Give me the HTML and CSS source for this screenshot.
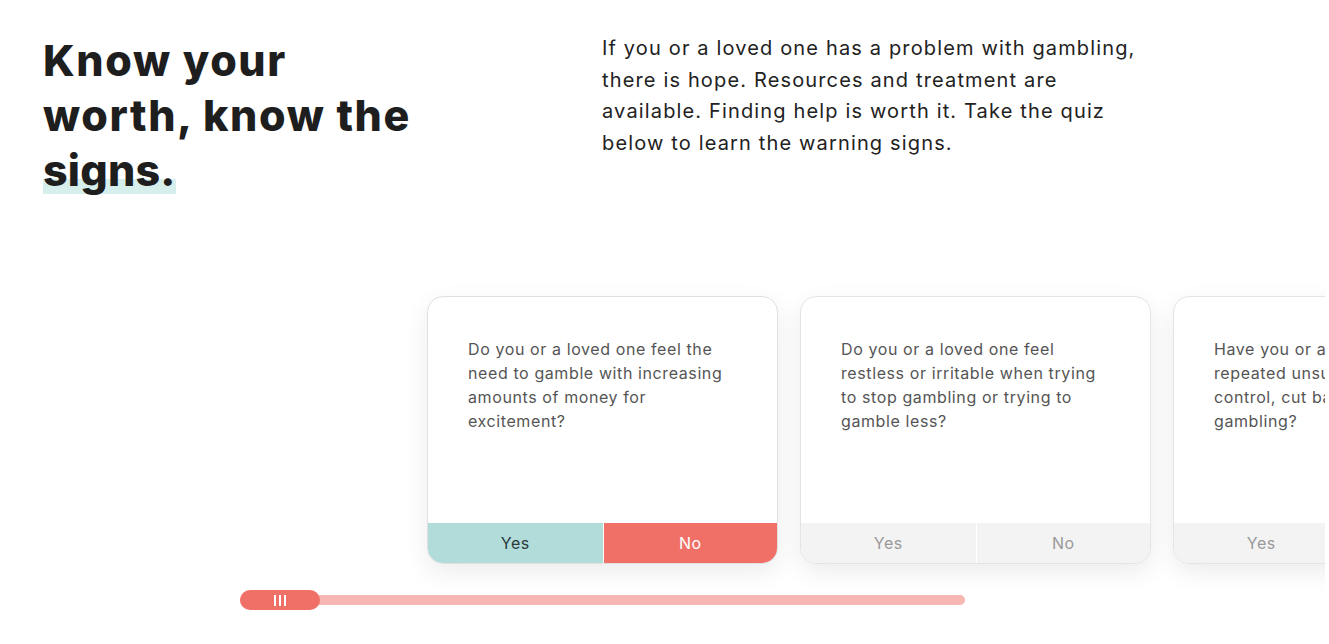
FILE: index.html
```html
<!DOCTYPE html>
<html lang="en">
<head>
<meta charset="utf-8">
<title>Know your worth</title>
<link rel="stylesheet" href="styles.css">
</head>
<body>
<main class="page">
  <section class="intro">
    <h1 class="title">Know your<br>worth, know the<br><span class="mark">signs.</span></h1>
    <p class="lead">If you or a loved one has a problem with gambling, there is hope. Resources and treatment are available. Finding help is worth it. Take the quiz below to learn the warning signs.</p>
  </section>
  <section class="quiz">
    <div class="cards">
      <div class="card active">
        <p class="q">Do you or a loved one feel the need to gamble with increasing amounts of money for excitement?</p>
        <div class="answers"><span class="btn yes">Yes</span><span class="btn no">No</span></div>
      </div>
      <div class="card">
        <p class="q">Do you or a loved one feel restless or irritable when trying to stop gambling or trying to gamble less?</p>
        <div class="answers"><span class="btn">Yes</span><span class="btn">No</span></div>
      </div>
      <div class="card">
        <p class="q">Have you or a loved one made repeated unsuccessful efforts to control, cut back on or stop gambling?</p>
        <div class="answers"><span class="btn">Yes</span><span class="btn">No</span></div>
      </div>
    </div>
    <div class="slider">
      <div class="track"><div class="thumb"><i></i><i></i><i></i></div></div>
    </div>
  </section>
</main>
</body>
</html>
```
FILE: styles.css
```css
html, body { margin: 0; padding: 0; background: #fff; }
body { font-family: Inter, "DejaVu Sans", sans-serif; color: #222; overflow: hidden; }
.page { width: 1329px; height: 644px; }
.intro { display: grid; grid-template-columns: 559px 560px; padding: 33px 0 0 43px; height: 296px; box-sizing: border-box; }
.title { margin: 0; font-size: 43px; line-height: 55px; font-weight: 800; color: #1e1e1e; letter-spacing: 1.6px; }
.mark { letter-spacing: 0.2px; background: linear-gradient(to bottom, transparent 67%, #d6eeec 67%, #d6eeec 96%, transparent 96%); }
.lead { margin: 0; font-size: 20px; line-height: 31.5px; color: #222; font-weight: 400; letter-spacing: 1.15px; }
.quiz { padding-left: 407px; }
.cards { display: flex; gap: 22px; width: 898px; overflow: hidden; padding: 33px 0 30px 20px; margin-top: -33px; }
.card { flex: 0 0 351px; height: 268px; box-sizing: border-box; border: 1px solid #e4e4e4; border-radius: 16px; background: #fff; box-shadow: 0 8px 24px rgba(0,0,0,0.08); display: flex; flex-direction: column; overflow: hidden; }
.q { margin: 0; flex: 1; padding: 40px 40px 0; font-size: 16px; line-height: 24px; color: #555; letter-spacing: 0.6px; }
.answers { display: grid; grid-template-columns: 1fr 1fr; height: 40px; }
.btn { display: flex; align-items: center; justify-content: center; background: #f3f3f3; color: #999; font-size: 16px; letter-spacing: 0.5px; }
.btn + .btn { border-left: 1px solid #fff; }
.active { border-color: #e0e0e0; }
.active .yes { background: #b1dcda; color: #2a3a3a; }
.active .no { background: #f07068; color: #fff; }
.slider { margin-left: -167px; margin-top: -5px; width: 725px; }
.track { height: 10px; border-radius: 5px; background: #f6b6b1; position: relative; margin-top: 6px; }
.thumb { position: absolute; left: 0; top: -5px; width: 80px; height: 20px; border-radius: 10px; background: #f07068; display: flex; justify-content: center; align-items: center; gap: 3px; }
.thumb i { width: 2px; height: 11px; background: #fff; }
```
